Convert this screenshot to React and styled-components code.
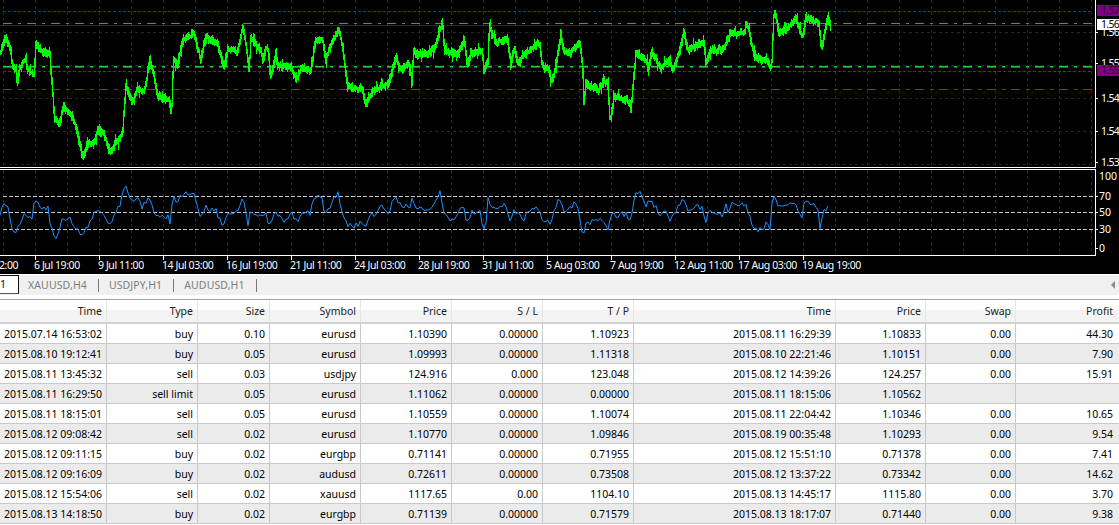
import styled, {createGlobalStyle} from "styled-components";

const GlobalStyle = createGlobalStyle`
    html, body {
        margin: 0;
        height: 525px;
        overflow: hidden;
        background: #fff;
        font-family: "Noto Sans", "Liberation Sans", sans-serif;
        font-size: 10.5px;
    }
`;

// control points read off the chart: [x, y] in screen pixels
const zoomed = (pts, ox, oy) => pts.map(([x, y]) => [ox + x / 3, oy + y / 3]);

const pricePoints = [
    ...zoomed([[0,155],[15,110],[30,150],[35,200],[45,205],[50,250],[55,210],[75,170],[80,210],[100,225],[105,130],[125,155],[148,160],[150,210],[155,270],[160,350],[175,380],[187,320],[205,340],[220,360],[230,400],[245,470],[260,435],[280,430],[292,385],[310,400],[325,460],[345,430],[365,400],[375,260],[395,310],[410,265],[430,280],[447,180],[460,230],[470,290],[505,305],[512,340],[518,170],[530,200],[545,120],[580,100],[600,180],[615,110],[650,130],[670,200],[680,150],[710,155],[727,80],[745,210],[750,115],[780,150],[785,180],[800,135],[810,230],[825,160],[830,200],[870,200],[885,240],[905,200],[930,215],[945,120],[965,120],[975,180],[985,150],[1015,85],[1030,175],[1040,260],[1085,265],[1095,315],[1115,270],[1165,250],[1185,170]], 0, 0),
    ...zoomed([[0,212],[25,190],[33,245],[38,150],[50,165],[100,150],[110,120],[125,60],[130,150],[170,165],[190,120],[200,200],[210,160],[245,150],[248,215],[262,180],[265,75],[285,130],[320,115],[330,195],[340,140],[350,185],[390,150],[415,125],[425,200],[445,205],[450,240],[460,230],[468,180],[480,105],[490,155],[510,160],[535,125],[545,190],[548,310],[555,250],[590,270],[620,240],[628,365],[640,290],[680,300],[690,330],[705,160],[735,180],[745,210],[752,150],[780,205],[805,180],[815,210],[835,160],[848,95],[860,150],[910,125],[915,190],[930,150],[965,150],[975,130],[988,100],[1030,100],[1036,60],[1062,170],[1100,185],[1112,205],[1120,25],[1135,100],[1160,85],[1185,55],[1205,115],[1215,50],[1255,70],[1262,150],[1280,50],[1290,78]], 400, 0),
];

const rsiPoints = [
    ...zoomed([[0,145],[15,115],[25,130],[35,190],[50,195],[55,180],[72,150],[80,160],[95,165],[103,110],[125,130],[145,130],[150,180],[168,225],[185,170],[215,165],[230,195],[250,208],[285,140],[295,135],[325,175],[345,150],[360,115],[377,65],[395,110],[410,95],[425,125],[445,100],[470,155],[505,155],[512,175],[518,90],[530,115],[540,90],[580,85],[600,160],[615,125],[650,140],[668,185],[680,150],[705,150],[727,95],[745,180],[750,145],[780,155],[800,140],[805,180],[825,145],[850,165],[875,145],[885,170],[905,150],[930,145],[945,90],[965,100],[975,145],[985,130],[1015,85],[1030,155],[1045,185],[1085,175],[1095,190],[1110,150],[1130,145],[1145,125],[1165,150],[1180,90]], 0, 165),
    ...zoomed([[0,105],[30,115],[35,90],[45,115],[100,115],[120,62],[130,125],[145,145],[170,140],[190,100],[200,165],[215,130],[240,120],[245,170],[258,165],[263,80],[280,120],[320,105],[332,165],[340,125],[370,150],[390,120],[418,110],[425,150],[445,160],[452,170],[462,130],[478,82],[495,125],[530,97],[537,130],[548,195],[560,160],[605,145],[612,165],[625,185],[632,140],[680,130],[690,155],[708,62],[730,80],[737,115],[750,90],[780,130],[800,120],[812,150],[848,82],[860,115],[905,110],[915,155],[930,125],[965,125],[967,155],[975,100],[988,130],[992,100],[1035,100],[1060,175],[1085,180],[1105,155],[1110,180],[1118,62],[1135,115],[1160,105],[1185,90],[1205,155],[1213,95],[1235,95],[1255,125],[1260,180],[1270,130],[1282,110],[1287,122]], 400, 170),
];

const seeded = (seed) => () => {
    seed = (seed + 0x6d2b79f5) | 0;
    let t = Math.imul(seed ^ (seed >>> 15), 1 | seed);
    t = (t + Math.imul(t ^ (t >>> 7), 61 | t)) ^ t;
    return ((t ^ (t >>> 14)) >>> 0) / 4294967296;
};

const valueAt = (points, x, cursor) => {
    let i = cursor;
    while (i < points.length - 2 && points[i + 1][0] < x) i++;
    const [x0, y0] = points[i];
    const [x1, y1] = points[i + 1];
    const t = x1 === x0 ? 0 : (x - x0) / (x1 - x0);
    return [y0 + (y1 - y0) * t, i];
};

// one high-low bar per pixel column, like the terminal draws a line chart of ticks
const priceBars = (points, seed) => {
    const rnd = seeded(seed);
    const last = Math.floor(points[points.length - 1][0]);
    let d = "";
    let i = 0;
    let prev = points[0][1];
    for (let x = 0; x <= last; x++) {
        const [base, next] = valueAt(points, x, i);
        i = next;
        const y = base + (rnd() - 0.5) * 3;
        const up = 1.5 + rnd() * 3 + (rnd() < 0.05 ? 4 : 0);
        const down = 1.5 + rnd() * 3 + (rnd() < 0.05 ? 4 : 0);
        const top = Math.round(Math.min(prev, y) - up);
        const bottom = Math.round(Math.max(prev, y) + down);
        d += `M${x + 0.5} ${top}V${bottom}`;
        prev = y;
    }
    return d;
};

const rsiLine = (points, seed) => {
    const rnd = seeded(seed);
    const last = points[points.length - 1][0];
    const out = [];
    let i = 0;
    for (let x = 0; x <= last; x += 2) {
        const [base, next] = valueAt(points, x, i);
        i = next;
        out.push(`${x},${(base + (rnd() - 0.5) * 6).toFixed(1)}`);
    }
    return out.join(" ");
};

const gridX = Array.from({length: 35}, (_, i) => 3.5 + i * 32);
const gridY = [-1, 32.5, 65.5, 98.5, 131.5, 164.5];

const priceTicks = [
    {y: 6, text: "1.57", cut: true},
    {y: 32, text: "1.56"},
    {y: 63, text: "1.55"},
    {y: 98, text: "1.54"},
    {y: 131, text: "1.54"},
    {y: 162, text: "1.53"},
];

const rsiTicks = [
    {y: 7, text: "100", tick: false},
    {y: 27, text: "70", tick: true},
    {y: 43, text: "50", tick: true},
    {y: 60, text: "30", tick: true},
    {y: 79, text: "0", tick: true},
];

const times = ["6 Jul 19:00", "9 Jul 11:00", "14 Jul 03:00", "16 Jul 19:00", "21 Jul 11:00", "24 Jul 03:00", "28 Jul 19:00",
    "31 Jul 11:00", "5 Aug 03:00", "7 Aug 19:00", "12 Aug 11:00", "17 Aug 03:00", "19 Aug 19:00"];

const headers = ["Time", "Type", "Size", "Symbol", "Price", "S / L", "T / P", "Time", "Price", "Swap", "Profit"];

const orders = [
    ["2015.07.14 16:53:02", "buy", "0.10", "eurusd", "1.10390", "0.00000", "1.10923", "2015.08.11 16:29:39", "1.10833", "0.00", "44.30"],
    ["2015.08.10 19:12:41", "buy", "0.05", "eurusd", "1.09993", "0.00000", "1.11318", "2015.08.10 22:21:46", "1.10151", "0.00", "7.90"],
    ["2015.08.11 13:45:32", "sell", "0.03", "usdjpy", "124.916", "0.000", "123.048", "2015.08.12 14:39:26", "124.257", "0.00", "15.91"],
    ["2015.08.11 16:29:50", "sell limit", "0.05", "eurusd", "1.11062", "0.00000", "0.00000", "2015.08.11 18:15:06", "1.10562", "", ""],
    ["2015.08.11 18:15:01", "sell", "0.05", "eurusd", "1.10559", "0.00000", "1.10074", "2015.08.11 22:04:42", "1.10346", "0.00", "10.65"],
    ["2015.08.12 09:08:42", "sell", "0.02", "eurusd", "1.10770", "0.00000", "1.09846", "2015.08.19 00:35:48", "1.10293", "0.00", "9.54"],
    ["2015.08.12 09:11:15", "buy", "0.02", "eurgbp", "0.71141", "0.00000", "0.71955", "2015.08.12 15:51:10", "0.71378", "0.00", "7.41"],
    ["2015.08.12 09:16:09", "buy", "0.02", "audusd", "0.72611", "0.00000", "0.73508", "2015.08.12 13:37:22", "0.73342", "0.00", "14.62"],
    ["2015.08.12 15:54:06", "sell", "0.02", "xauusd", "1117.65", "0.00", "1104.10", "2015.08.13 14:45:17", "1115.80", "0.00", "3.70"],
    ["2015.08.13 14:18:50", "buy", "0.02", "eurgbp", "0.71139", "0.00000", "0.71579", "2015.08.13 18:17:07", "0.71440", "0.00", "9.38"],
];

const COLUMNS = "107px 91px 72px 91px 91px 91px 91px 202px 90px 90px 103px";

const Page = styled.div`
    width: 1119px;
    height: 525px;
    overflow: hidden;
    background: #fff;
    color: #000;
`;

const Terminal = styled.div`
    background: #000;
    height: 274px;
    border-bottom: 1px solid #fff;
    color: #fff;
`;

const Pane = styled.div`
    display: flex;
    height: ${p => p.$height}px;
    margin-bottom: ${p => p.$gap || 0}px;
`;

const Plot = styled.svg`
    display: block;
    flex: 0 0 1096px;
    width: 1096px;
    height: 100%;
    box-sizing: border-box;
    border-right: 1px solid #fff;
    border-bottom: 1px solid #fff;
    border-top: ${p => p.$framed ? "1px solid #fff" : "none"};
`;

const Axis = styled.div`
    position: relative;
    flex: 1;
    overflow: hidden;
`;

const AxisLabel = styled.span`
    position: absolute;
    left: 0;
    top: ${p => p.$y}px;
    transform: translateY(-50%);
    padding-left: ${p => p.$inset}px;
    letter-spacing: ${p => p.$tight ? "-0.7px" : "0"};
    line-height: 12px;
    white-space: nowrap;
    &::before {
        content: "";
        display: ${p => p.$noTick ? "none" : "block"};
        position: absolute;
        left: 0;
        top: 50%;
        width: 2px;
        height: 1px;
        background: #fff;
    }
`;

const PriceTag = styled.span`
    position: absolute;
    left: 1px;
    top: ${p => p.$y}px;
    width: 19px;
    height: 11px;
    padding-left: 4px;
    letter-spacing: -0.7px;
    line-height: 11px;
    background: ${p => p.$bg};
    color: ${p => p.$fg};
`;

const TimeAxis = styled.div`
    display: flex;
    height: 18px;
    line-height: 17px;
    letter-spacing: -0.42px;
`;

const TimeStub = styled.div`
    flex: 0 0 35px;
    overflow: hidden;
`;

const TimeLabel = styled.div`
    position: relative;
    flex: 0 0 64px;
    white-space: nowrap;
    &::before {
        content: "";
        position: absolute;
        left: 0;
        top: 0;
        width: 1px;
        height: 4px;
        background: #fff;
    }
`;

const TimeText = styled.span`
    display: block;
    margin-top: 1px;
    margin-left: -1px;
`;

const TabBar = styled.div`
    display: flex;
    align-items: center;
    height: 20px;
    background: #f0f0f0;
    color: #7d7d7d;
    letter-spacing: 0.12px;
`;

const ActiveTab = styled.div`
    box-sizing: border-box;
    width: 19px;
    height: 19px;
    align-self: flex-start;
    background: #fff;
    color: #111;
    line-height: 17px;
    border-top: 1px solid #111;
    border-right: 1px solid #111;
    border-bottom: 1px solid #555;
`;

const Tab = styled.div`
    display: flex;
    align-items: center;
    height: 13px;
    padding: 0 11px 0 ${p => p.$first ? 9 : 10}px;
    border-right: 1px solid #777;
    white-space: nowrap;
`;

const ScrollArrow = styled.svg`
    margin-left: auto;
    margin-right: 3px;
`;

const Table = styled.div`
    margin-top: 4px;
    border-top: 1px solid #a2a2a2;
`;

const HeaderRow = styled.div`
    display: grid;
    grid-template-columns: ${COLUMNS};
    height: 24px;
    box-sizing: border-box;
    border-bottom: 2px solid #d2d2d2;
    background: linear-gradient(#fff 0%, #fff 45%, #f3f3f3 46%, #f3f3f3 100%);
`;

const HeaderCell = styled.div`
    box-sizing: border-box;
    padding: 1px ${p => p.$last ? 6 : 4}px 0 0;
    text-align: right;
    line-height: 21px;
    color: #222;
    border-right: ${p => p.$last ? "none" : "1px solid #e6e6e6"};
`;

const Row = styled.div`
    display: grid;
    grid-template-columns: ${COLUMNS};
    height: 20px;
    box-sizing: border-box;
    border-bottom: 1px solid #c9c9c9;
    background: ${p => p.$alt ? "#ebebeb" : "#fff"};
`;

const Cell = styled.div`
    box-sizing: border-box;
    padding: 1px ${p => p.$last ? 6 : 4}px 0 0;
    text-align: right;
    line-height: 18px;
    white-space: nowrap;
    border-right: ${p => p.$last ? "none" : "1px solid #c9c9c9"};
`;

const Grid = ({lines, minY, maxY}) => (
    <g stroke="#262626" strokeWidth="1" strokeDasharray="3 3">
        {gridX.map(x => <line key={x} x1={x} x2={x} y1={minY} y2={maxY}/>)}
        {lines.map(y => <line key={y} x1="3" x2="1094" y1={y} y2={y}/>)}
    </g>
);

const Level = ({y, color, dash = "9 6 3 6"}) => (
    <line x1="3" x2="1093" y1={y} y2={y} stroke={color} strokeWidth="1" strokeDasharray={dash}/>
);

export default function App() {
    return (
        <Page>
            <GlobalStyle/>
            <Terminal>
                <Pane $height={168} $gap={1}>
                    <Plot viewBox="0 0 1095 167">
                        <Grid lines={gridY} minY={0} maxY={167}/>
                        <line x1="0" x2="1095" y1="25.5" y2="25.5" stroke="#2a2a2a"/>
                        <Level y={11.5} color="#7f0f7f" dash="3 2"/>
                        <Level y={71.5} color="#7f0f7f" dash="3 2"/>
                        <Level y={23.5} color="#2fa82f"/>
                        <Level y={66.5} color="#32cd32"/>
                        <Level y={67.5} color="#e01010"/>
                        <Level y={89.5} color="#e01010"/>
                        <path d={priceBars(pricePoints, 4211)} fill="none" stroke="#00ff00" strokeWidth="1" shapeRendering="crispEdges"/>
                    </Plot>
                    <Axis>
                        {priceTicks.filter(t => !t.cut).map(t => <AxisLabel key={t.y} $y={t.y} $inset={5} $tight>{t.text}</AxisLabel>)}
                        <PriceTag $y={5} $bg="#800080" $fg="#1a0a1a">1.57</PriceTag>
                        <PriceTag $y={19} $bg="#fff" $fg="#000">1.56</PriceTag>
                        <PriceTag $y={65} $bg="#800080" $fg="#1a0a1a">1.55</PriceTag>
                    </Axis>
                </Pane>
                <Pane $height={87}>
                    <Plot $framed viewBox="0 170 1095 85">
                        <Grid lines={[]} minY={170} maxY={255}/>
                        <Level y={196.5} color="#c8c8c8" dash="4 2"/>
                        <Level y={212.5} color="#c8c8c8" dash="4 2"/>
                        <Level y={229.5} color="#c8c8c8" dash="4 2"/>
                        <polyline points={rsiLine(rsiPoints, 977)} fill="none" stroke="#1e90ff" strokeWidth="1"/>
                    </Plot>
                    <Axis>
                        {rsiTicks.map(t => <AxisLabel key={t.y} $y={t.y} $inset={3} $noTick={!t.tick}>{t.text}</AxisLabel>)}
                    </Axis>
                </Pane>
                <TimeAxis>
                    <TimeStub><TimeText>2:00</TimeText></TimeStub>
                    {times.map(t => <TimeLabel key={t}><TimeText>{t}</TimeText></TimeLabel>)}
                </TimeAxis>
            </Terminal>
            <TabBar>
                <ActiveTab>1</ActiveTab>
                <Tab $first>XAUUSD,H4</Tab>
                <Tab>USDJPY,H1</Tab>
                <Tab>AUDUSD,H1</Tab>
                <ScrollArrow width="6" height="8" viewBox="0 0 6 8">
                    <path d="M5 0 L1 4 L5 8 Z" fill="#8a8a8a"/>
                </ScrollArrow>
            </TabBar>
            <Table>
                <HeaderRow>
                    {headers.map((h, i) => <HeaderCell key={i} $last={i === headers.length - 1}>{h}</HeaderCell>)}
                </HeaderRow>
                {orders.map((row, r) => (
                    <Row key={r} $alt={r % 2 === 1}>
                        {row.map((value, i) => <Cell key={i} $last={i === row.length - 1}>{value}</Cell>)}
                    </Row>
                ))}
            </Table>
        </Page>
    );
}
